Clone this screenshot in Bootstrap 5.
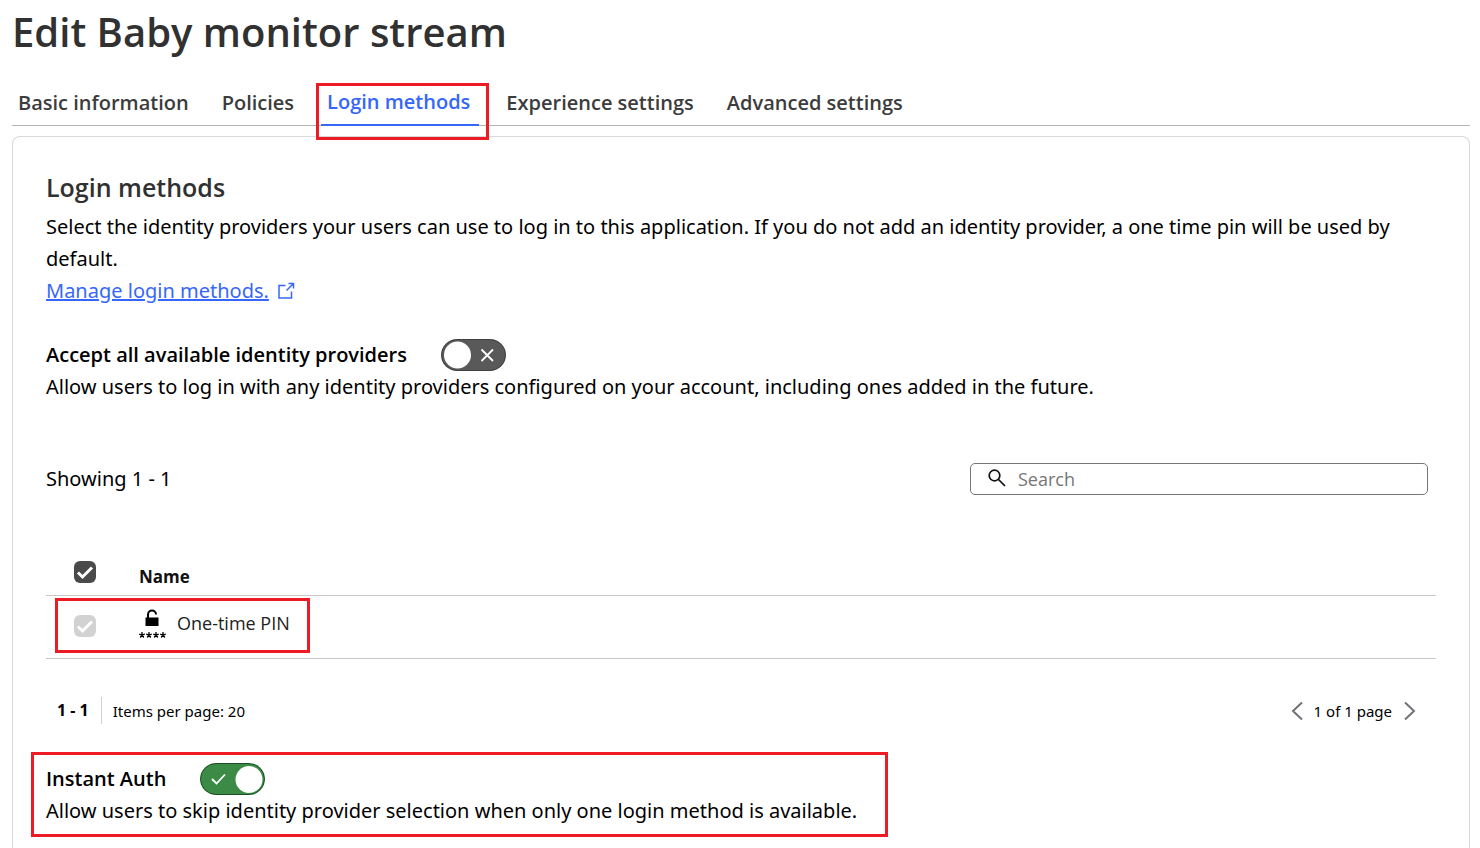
<!DOCTYPE html>
<html lang="en">
<head>
<meta charset="utf-8">
<meta name="viewport" content="width=device-width, initial-scale=1">
<title>Edit Baby monitor stream</title>
<link href="https://cdn.jsdelivr.net/npm/bootstrap@5.3.0/dist/css/bootstrap.min.css" rel="stylesheet">
<style>
  body { font-family: "Noto Sans", "Open Sans", sans-serif; font-size: 20px; line-height: 32px; color: #000; background: #fff; }
  .page { padding: 3px 10px 0 12px; }
  h1, h2, .app-tabs, .setting-label, .methods, .search-box input { font-family: "Open Sans", "Noto Sans", sans-serif; }
  h1 { font-size: 40px; line-height: 58px; font-weight: 600; color: #313131; }
  .app-tabs { gap: 21px; margin-top: 20px; margin-bottom: 10px; border-bottom: 1px solid #b6b6b6; }
  .app-tabs .nav-link { padding: 6px; font-size: 20px; line-height: 32px; font-weight: 600; color: #3c3c3c; margin-bottom: -1px; }
  .app-tabs .nav-link.active { padding: 5px 9px 6px 6px; color: #3667fa; border-bottom: 2px solid #3667fa; }
  .marked { position: relative; }
  .marked::after { content: ""; position: absolute; border: 3px solid #ed1c24; pointer-events: none; }
  .mark-tab::after { inset: 2px -10px -16px -5px; }
  .mark-row::after { inset: -9px -20px -14px -84px; }
  .mark-auth::after { inset: -11px -31px -10px -15px; }
  .panel { padding: 33px; border: 1px solid #d9d9d9; border-bottom: 0; border-radius: 8px 8px 0 0; }
  h2 { font-size: 25px; line-height: 34px; font-weight: 600; color: #313131; }
  .intro { margin: 7px 0 0; }
  .manage { color: #3667fa; }
  .setting-label { font-weight: 600; }
  .setting-row { gap: 34px; }
  .toggle { width: 65px; height: 32px; margin: 0; border-radius: 16px; appearance: none; background: #595959 center / 100% 100% no-repeat;
    background-image: url("data:image/svg+xml,%3Csvg xmlns='http://www.w3.org/2000/svg' viewBox='0 0 65 32'%3E%3Crect x='.5' y='.5' width='64' height='31' rx='15.5' fill='%23595959' stroke='%23404040'/%3E%3Ccircle cx='16.500' cy='16' r='13.500' fill='%23fff'/%3E%3Cpath d='M40.500 10.500l11.500 11.500m0-11.500L40.500 22' stroke='%23fff' stroke-width='1.800'/%3E%3C/svg%3E"); }
  .toggle:checked { background-color: #3b8b47;
    background-image: url("data:image/svg+xml,%3Csvg xmlns='http://www.w3.org/2000/svg' viewBox='0 0 65 32'%3E%3Crect x='.5' y='.5' width='64' height='31' rx='15.5' fill='%233b8b47' stroke='%23204d28'/%3E%3Ccircle cx='49' cy='16.500' r='13.500' fill='%23fff'/%3E%3Cpath d='M12 16l4.500 4.500L25 11.500' fill='none' stroke='%23fff' stroke-width='1.800'/%3E%3C/svg%3E"); }
  .toolbar { margin-top: 60px; padding-right: 8px; }
  .search-box { flex: 0 1 458px; height: 32px; border: 1px solid #767676; border-radius: 5px; padding: 0 17px; gap: 12px; }
  .search-box input { padding: 0; border: 0; font-size: 18px; line-height: 30px; background: none; color: #111; }
  .search-box input:focus { outline: 0; }
  .search-box input::placeholder { color: #767676; opacity: 1; }
  .methods { margin: 54px 0 0; font-size: 18px; line-height: 24px; border-color: #c8c8c8; }
  .methods th, .methods td { padding: 0; color: #222; border-bottom: 1px solid #c8c8c8; vertical-align: middle; }
  .methods th { height: 46px; padding-top: 10px; color: #111; font-size: 17px; font-weight: 700; }
  .methods td { height: 63px; padding-bottom: 2px; }
  .methods .pick { width: 93px; padding-left: 28px; }
  .methods th.pick { padding-top: 0; }
  .methods td.pick { padding-bottom: 2px; }
  .tick { display: block; width: 22px; height: 22px; margin: 0; appearance: none; border-radius: 6px; background: #4a4a4a center / 100% 100% no-repeat;
    background-image: url("data:image/svg+xml,%3Csvg xmlns='http://www.w3.org/2000/svg' viewBox='0 0 22 22'%3E%3Cpath d='M4 11.500l4.500 4.500L18 6.500' fill='none' stroke='%23fff' stroke-width='3'/%3E%3C/svg%3E"); }
  .tick:disabled { background-color: #d2d2d2; }
  .pager { margin-top: 36px; padding: 0 20px 0 11px; font-size: 15px; line-height: 32px; }
  .pager .count { font-size: 16px; line-height: 27px; padding-right: 12px; margin-right: 11px; border-right: 1px solid #d0d0d0; }
  .pager button { padding: 0; border: 0; background: none; line-height: 0; }
  .pager .turn { gap: 10px; }
  .instant { margin-top: 36px; }
</style>
</head>
<body>
<div class="page d-flex flex-column min-vh-100">
  <h1 class="m-0">Edit Baby monitor stream</h1>
  <nav class="nav app-tabs" aria-label="Application sections">
    <a class="nav-link" href="#basic">Basic information</a>
    <a class="nav-link" href="#policies">Policies</a>
    <a class="nav-link active marked mark-tab" href="#login" aria-current="page">Login methods</a>
    <a class="nav-link" href="#experience">Experience settings</a>
    <a class="nav-link" href="#advanced">Advanced settings</a>
  </nav>
  <main class="panel flex-grow-1" id="login">
    <h2 class="m-0">Login methods</h2>
    <p class="intro">Select the identity providers your users can use to log in to this application. If you do not add an identity provider, a one time pin will be used by default.</p>
    <div class="d-flex align-items-center gap-2">
      <a class="manage" href="#manage">Manage login methods.</a>
      <svg width="18" height="18" viewBox="0 0 18 18" fill="none" stroke="#3667fa" stroke-width="1.500" aria-hidden="true"><path d="M8.500 3.500H2v12.500h12.500V9.500M11.500 1.500h5v5M16.500 1.500L9.500 8.500"/></svg>
    </div>

    <section class="mt-4 pt-2">
      <div class="setting-row d-flex align-items-center">
        <label class="setting-label" for="acceptAll">Accept all available identity providers</label>
        <input class="toggle" type="checkbox" role="switch" id="acceptAll">
      </div>
      <p class="m-0">Allow users to log in with any identity providers configured on your account, including ones added in the future.</p>
    </section>

    <div class="toolbar d-flex align-items-center justify-content-between">
      <span>Showing 1 - 1</span>
      <div class="search-box d-flex align-items-center">
        <svg class="flex-shrink-0" width="18" height="20" viewBox="0 0 18 20" fill="none" stroke="#111" stroke-width="1.700" aria-hidden="true"><circle cx="6.500" cy="6.500" r="5.300"/><path d="M10.500 10.500l6.500 6.500"/></svg>
        <input class="flex-grow-1" type="search" placeholder="Search" aria-label="Search">
      </div>
    </div>

    <table class="methods w-100">
      <thead>
        <tr><th class="pick"><input class="tick" type="checkbox" checked aria-label="Select all"></th><th>Name</th></tr>
      </thead>
      <tbody>
        <tr>
          <td class="pick"><input class="tick" type="checkbox" checked disabled id="otp"></td>
          <td><label class="marked mark-row d-inline-flex align-items-center" for="otp">
            <svg class="me-2" width="30" height="32" viewBox="0 0 30 32" aria-hidden="true"><path d="M6.500 10.500h13v8.500h-13z"/><path d="M9 11V7.500a4 4 0 0 1 8 0" fill="none" stroke="#000" stroke-width="2"/><path id="star" d="M3 28v-3M3 28l2.800-.9M3 28l1.800 2.500M3 28l-1.800 2.500M3 28l-2.800-.9" stroke="#000" stroke-width="1.300"/><use href="#star" x="7"/><use href="#star" x="14"/><use href="#star" x="21"/></svg>
            <span>One-time PIN</span></label></td>
        </tr>
      </tbody>
    </table>

    <div class="pager d-flex align-items-center">
      <strong class="count">1 - 1</strong>
      <span>Items per page: 20</span>
      <div class="turn d-flex align-items-center ms-auto">
        <button type="button" aria-label="Previous page"><svg width="14" height="20" viewBox="0 0 14 20" fill="none" stroke="#6e7278" stroke-width="2"><path d="M12 1.500L3 10l9 8.500"/></svg></button>
        <span>1 of 1 page</span>
        <button type="button" aria-label="Next page"><svg width="14" height="20" viewBox="0 0 14 20" fill="none" stroke="#6e7278" stroke-width="2"><path d="M3 1.500l9 8.500-9 8.500"/></svg></button>
      </div>
    </div>

    <section class="instant marked mark-auth d-inline-block">
      <div class="setting-row d-flex align-items-center">
        <label class="setting-label" for="instantAuth">Instant Auth</label>
        <input class="toggle" type="checkbox" role="switch" id="instantAuth" checked>
      </div>
      <p class="m-0">Allow users to skip identity provider selection when only one login method is available.</p>
    </section>
  </main>
</div>
<script src="https://cdn.jsdelivr.net/npm/bootstrap@5.3.0/dist/js/bootstrap.bundle.min.js"></script>
</body>
</html>
